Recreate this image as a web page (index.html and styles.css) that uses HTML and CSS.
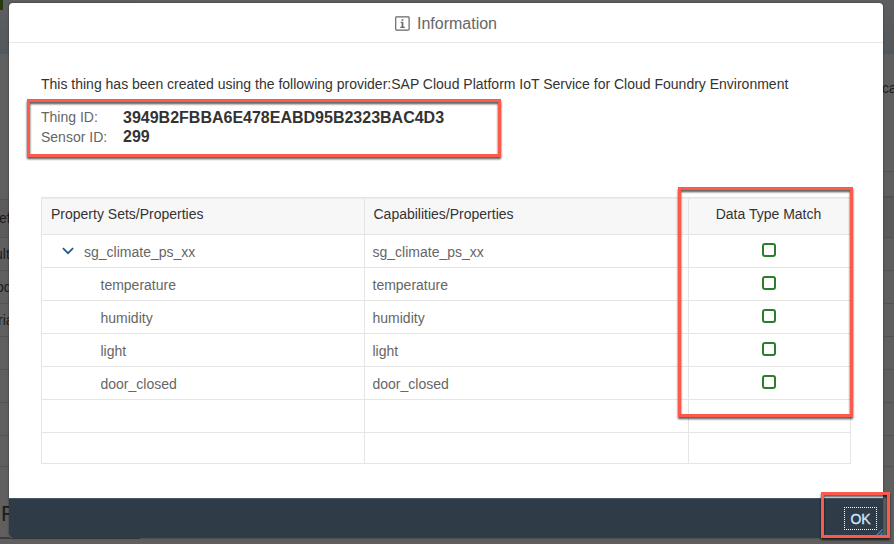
FILE: index.html
```
<!DOCTYPE html>
<html lang="en">
<head>
<meta charset="utf-8">
<title>Information</title>
<link rel="stylesheet" href="styles.css">
</head>
<body>
<div class="page" aria-hidden="true">
  <div class="side side-left">
    <div class="band band-top"><i class="leaf"></i></div>
    <div class="band band-gap"></div>
    <div class="band band-head band-text"><span class="cut-1">ef</span></div>
    <div class="band band-text"><span class="cut-5">ult</span></div>
    <div class="band band-text"><span class="cut-4">od</span></div>
    <div class="band band-text"><span class="cut-2">ria</span></div>
    <div class="band"></div>
    <div class="band"></div>
    <div class="band"></div>
    <div class="band band-last"></div>
    <div class="band band-title">F</div>
  </div>
  <div class="side side-right">
    <div class="band band-top"></div>
    <div class="band band-label">ca</div>
    <div class="band band-small"></div>
    <div class="band band-head"></div>
    <div class="band"></div>
    <div class="band"></div>
    <div class="band"></div>
    <div class="band"></div>
    <div class="band"></div>
    <div class="band"></div>
    <div class="band band-last"></div>
  </div>
</div>

<section class="dialog" role="dialog">
  <header class="dialog-header">
    <svg class="info-icon" width="15" height="15" viewBox="0 0 15 15" fill="none" stroke="#666" stroke-width="1.2">
      <rect x=".7" y=".9" width="13.4" height="13.2" rx=".8"/>
      <path d="M5.7 6.4h1.6M5.3 11.3h4.5" />
      <path d="M7.5 5.9v5.4M6.6 4h1.8" stroke-width="1.7"/>
    </svg>
    <h1>Information</h1>
  </header>
  <main class="dialog-body">
    <p class="intro">This thing has been created using the following provider:SAP Cloud Platform IoT Service for Cloud Foundry Environment</p>
    <dl class="ids">
      <dt class="thing-label">Thing ID:</dt><dd class="thing-id">3949B2FBBA6E478EABD95B2323BAC4D3</dd>
      <dt>Sensor ID:</dt><dd>299</dd>
    </dl>
    <div class="table">
      <div class="row head"><div>Property Sets/Properties</div><div>Capabilities/Properties</div><div>Data Type Match</div></div>
      <div class="row set"><div><svg class="chevron" width="12" height="8" viewBox="0 0 12 8" fill="none" stroke="#1d5b8e" stroke-width="1.7"><path d="M.9 1.1 6 6.2l5.1-5.1"/></svg>sg_climate_ps_xx</div><div>sg_climate_ps_xx</div><div><i class="check"></i></div></div>
      <div class="row"><div>temperature</div><div>temperature</div><div><i class="check"></i></div></div>
      <div class="row"><div>humidity</div><div>humidity</div><div><i class="check"></i></div></div>
      <div class="row"><div>light</div><div>light</div><div><i class="check"></i></div></div>
      <div class="row"><div>door_closed</div><div>door_closed</div><div><i class="check"></i></div></div>
      <div class="row"><div></div><div></div><div></div></div>
      <div class="row last"><div></div><div></div><div></div></div>
    </div>
  </main>
  <footer class="dialog-footer">
    <button class="ok">OK</button>
    <svg class="grip" width="7" height="7" viewBox="0 0 7 7" stroke="#4686bd" stroke-width="1.1"><path d="M.5 6.5l6-6M3.7 6.7l3-3"/></svg>
  </footer>
</section>

<div class="mark mark-ids"></div>
<div class="mark mark-match"></div>
<div class="mark mark-ok"></div>
</body>
</html>
```
FILE: styles.css
```
* { box-sizing: border-box; }
body {
  margin: 0;
  width: 894px;
  height: 544px;
  overflow: hidden;
  position: relative;
  background: #5f5f5f;
  font-family: "Liberation Sans", Arial, sans-serif;
  font-size: 14px;
  color: #333;
}

/* dimmed page behind the dialog */
.page {
  display: flex;
  justify-content: space-between;
  height: 544px;
  color: #1c1c1c;
}
.side { overflow: hidden; white-space: nowrap; }
.side-left { width: 140px; }
.side-right { width: 12px; }
.band {
  height: 33px;
  border-bottom: 1px solid #535353;
  display: flex;
  align-items: center;
}
.band-top {
  height: 54px;
  background: linear-gradient(#5d5e60, #54585c);
  border-bottom: 2px solid #4c5961;
  align-items: flex-start;
}
.leaf { width: 3px; height: 10px; background: #263b0b; }
.band-gap { height: 146px; }
.band-head { height: 38px; background: #5b5b5b; }
.band-text { padding-bottom: 1px; }
.cut-1 { margin-left: -1px; }
.cut-2 { margin-left: -2px; }
.cut-4 { margin-left: -4px; }
.cut-5 { margin-left: -5px; }
.band-label { height: 118px; padding-bottom: 50px; }
.band-small { height: 26px; border-bottom-width: 2px; }
.band-last { height: 31px; }
.side-right .band-head { height: 40px; }
.band-title {
  height: 72px;
  padding: 34px 0 0 1px;
  align-items: flex-start;
  font-size: 22px;
  border-bottom: 2px solid #3d3d3d;
}

.dialog {
  position: absolute;
  left: 9px;
  top: 3px;
  width: 874px;
  height: 535px;
  display: flex;
  flex-direction: column;
  background: #fff;
  border-radius: 4px;
  box-shadow: 0 0 2px rgba(0, 0, 0, .55);
  overflow: hidden;
}
.dialog-header {
  height: 40px;
  flex: none;
  display: flex;
  align-items: center;
  justify-content: center;
  gap: 7px;
  border-bottom: 1px solid #e8e8e8;
  color: #666;
}
.dialog-header h1 {
  margin: 0;
  font-size: 16px;
  font-weight: 400;
  line-height: 20px;
  position: relative;
  top: 1px;
}
.info-icon { position: relative; top: 1px; }
.dialog-body { flex: 1; padding: 32px 32px 0; }
.intro { margin: 0; height: 33px; line-height: 18px; white-space: nowrap; }
.ids {
  margin: 0;
  height: 86px;
  display: grid;
  grid-template-columns: 82px 1fr;
  grid-template-rows: 19px 19px;
  line-height: 19px;
}
.ids dt { color: #666; padding-top: 1px; }
.ids .thing-label { padding-top: 0; }
.ids dd { margin: 0; font-size: 16px; font-weight: 700; }

.table { width: 810px; border: 1px solid #e5e5e5; margin-top: 3px; color: #666; }
.row {
  display: grid;
  grid-template-columns: 323px 324px 161px;
  height: 33px;
  border-bottom: 1px solid #e5e5e5;
}
.row > div {
  display: flex;
  align-items: center;
  padding: 1px 0 0 7.5px;
  border-right: 1px solid #e5e5e5;
}
.row > div:first-child { padding-left: 58.5px; }
.row > div:last-child { border: 0; padding: 0 1px 2px 0; justify-content: center; }
.row.head { height: 37px; background: #f7f7f7; border-top: 1px solid #ececec; color: #333; }
.row.head > div { padding: 0 0 5px 8.5px; }
.row.head > div:first-child { padding-left: 9px; }
.row.head > div:last-child { padding: 0 2px 5px 0; }
.row.set > div:first-child { padding-left: 20px; }
.row.last { height: 30px; border: 0; }
.chevron { margin: -2px 10px 0 0; }
.check { width: 14px; height: 14px; border: 2px solid #2b7d2b; border-radius: 3px; }

.dialog-footer {
  height: 40px;
  flex: none;
  background: #2f3c48;
  border-top: 1px solid #46576a;
  display: flex;
  justify-content: flex-end;
  align-items: center;
  padding-right: 6px;
  position: relative;
}
.ok {
  width: 33px;
  height: 23px;
  padding: 0;
  border: 1px dotted #fff;
  background: none;
  color: #d1e8ff;
  font: 14px "Liberation Sans", Arial, sans-serif;
  -webkit-text-stroke: .3px #d1e8ff;
}
.grip { position: absolute; right: 0; bottom: 2px; }

/* highlight frames drawn over the dialog */
.mark {
  position: absolute;
  border: 3px solid #fc5b4b;
  filter: drop-shadow(0 2px 1px rgba(0, 0, 0, .7));
}
.mark-ids { left: 27px; top: 99px; width: 474px; height: 58px; }
.mark-match { left: 678px; top: 187px; width: 175px; height: 230px; }
.mark-ok { left: 821px; top: 492px; width: 69px; height: 46px; }
```
